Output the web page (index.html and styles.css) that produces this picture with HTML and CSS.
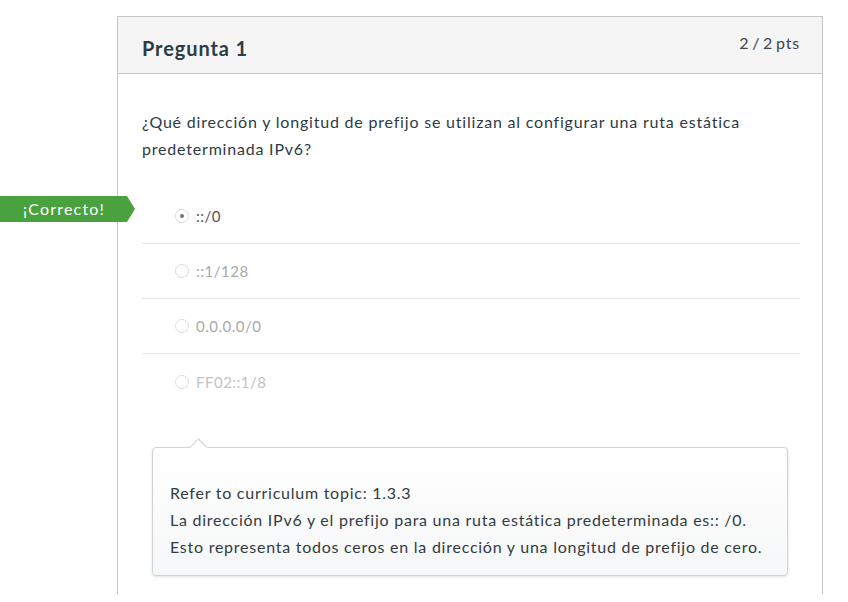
FILE: index.html
```html
<!DOCTYPE html>
<html lang="es">
<head>
<meta charset="utf-8">
<title>Pregunta 1</title>
<link rel="stylesheet" href="styles.css">
</head>
<body>
<div class="page">
  <div class="card">
    <div class="card-header">
      <h2 class="title">Pregunta 1</h2>
      <span class="pts">2 / 2 pts</span>
    </div>
    <div class="card-body">
      <p class="question">¿Qué dirección y longitud de prefijo se utilizan al configurar una ruta estática predeterminada IPv6?</p>
      <ul class="answers">
        <li class="answer selected">
          <span class="correct-badge">¡Correcto!</span>
          <span class="radio"><span class="dot"></span></span><span class="label">::/0</span>
        </li>
        <li class="answer"><span class="radio"></span><span class="label">::1/128</span></li>
        <li class="answer"><span class="radio"></span><span class="label">0.0.0.0/0</span></li>
        <li class="answer last"><span class="radio"></span><span class="label">FF02::1/8</span></li>
      </ul>
      <div class="comment">
        <p>Refer to curriculum topic: 1.3.3<br>La dirección IPv6 y el prefijo para una ruta estática predeterminada es:: /0.<br>Esto representa todos ceros en la dirección y una longitud de prefijo de cero.</p>
      </div>
    </div>
  </div>
</div>
</body>
</html>
```

FILE: styles.css
```css
* { box-sizing: border-box; }
html, body { margin: 0; padding: 0; background: #fff; }
body { font-family: Lato, "Open Sans", "Liberation Sans", sans-serif; color: #2d3b45; }

.page {
  padding: 16px 25px 0 117px;
}

.card {
  position: relative;
  width: 706px;
  height: 578px;
  border: 1px solid #c4c7c9;
  border-bottom: none;
}

.card-header {
  height: 57px;
  background: #f5f5f5;
  border-bottom: 1px solid #c7cacc;
  display: flex;
  justify-content: space-between;
  align-items: flex-start;
  padding: 0 22px 0 24px;
}

.title {
  margin: 18px 0 0;
  font-size: 20px;
  font-weight: 700;
  line-height: 26px;
  letter-spacing: 0.9px;
  color: #2d3b45;
}

.pts {
  margin-top: 15px;
  font-size: 16px;
  line-height: 22px;
  letter-spacing: 0.8px;
  word-spacing: -2px;
  color: #3b4650;
}

.card-body {
  padding: 34px 22px 0 24px;
}

.question {
  margin: 0;
  font-size: 16px;
  line-height: 27px;
  letter-spacing: 0.8px;
  color: #2d3b45;
  width: 640px;
}

.answers {
  list-style: none;
  margin: 27px 0 0;
  padding: 0;
}

.answer {
  position: relative;
  height: 55px;
  border-bottom: 1px solid #e6e6e6;
  display: flex;
  align-items: center;
  padding-left: 33px;
  font-size: 15px;
  letter-spacing: 0.5px;
  color: #a9a9a9;
}

.answer.last { border-bottom: none; color: #c2c2c2; }
.answer.selected { color: #555; }

.radio {
  width: 14px;
  height: 14px;
  border: 1px solid #dcdcdc;
  border-radius: 50%;
  display: flex;
  align-items: center;
  justify-content: center;
  margin-right: 7px;
}

.dot {
  width: 4px;
  height: 4px;
  border-radius: 50%;
  background: #777;
}

.correct-badge {
  position: absolute;
  left: -142px;
  top: 7px;
  width: 135px;
  height: 26px;
  background: #4aa23f;
  color: #fff;
  font-size: 16px;
  line-height: 26px;
  letter-spacing: 1.2px;
  padding-left: 23px;
  clip-path: polygon(0 0, 127px 0, 135px 13px, 127px 26px, 0 26px);
}

.comment {
  position: relative;
  margin: 38px 12px 0 10px;
  width: 636px;
  height: 129px;
  border: 1px solid #cfd3d6;
  border-radius: 4px;
  background: linear-gradient(#ffffff, #f6f7f8);
  box-shadow: 0 1px 3px rgba(0,0,0,0.12);
  padding: 31px 0 0 17px;
}

.comment::before {
  content: "";
  position: absolute;
  left: 39px;
  top: -7px;
  width: 12px;
  height: 12px;
  background: #fff;
  border-left: 1px solid #cfd3d6;
  border-top: 1px solid #cfd3d6;
  transform: rotate(45deg);
}

.comment p {
  margin: 0;
  font-size: 16px;
  line-height: 27px;
  letter-spacing: 0.75px;
  color: #333b42;
}
```
